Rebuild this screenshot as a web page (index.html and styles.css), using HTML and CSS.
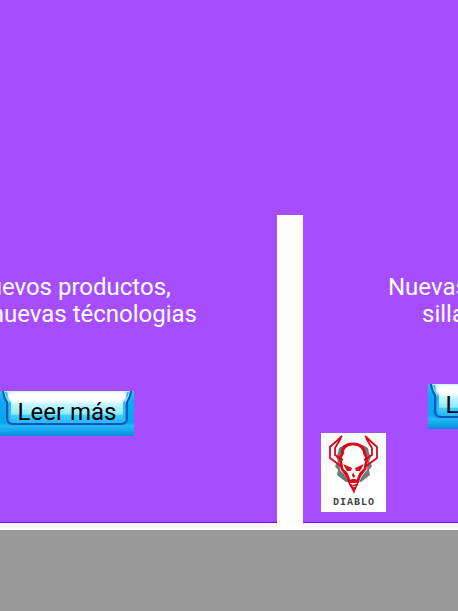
FILE: index.html
```html
<!DOCTYPE html>
<html lang="es">
<head>
<meta charset="utf-8">
<meta name="viewport" content="width=device-width, initial-scale=1">
<title>Novedades</title>
<link rel="stylesheet" href="styles.css">
</head>
<body>
<svg class="defs" aria-hidden="true">
  <defs>
    <linearGradient id="base" x2="0" y2="1"><stop offset="0" stop-color="#2fc0f8"/><stop offset=".25" stop-color="#12a8f2"/><stop offset=".7" stop-color="#08a5ef"/><stop offset=".78" stop-color="#29b5f5"/><stop offset=".9" stop-color="#0fa5ee"/><stop offset="1" stop-color="#0787db"/></linearGradient>
    <linearGradient id="glass" x2="0" y2="1"><stop offset="0" stop-color="#bdf3ff"/><stop offset=".35" stop-color="#d0faff"/><stop offset=".72" stop-color="#8eeaff"/><stop offset=".76" stop-color="#42cfff"/><stop offset="1" stop-color="#24b9f8"/></linearGradient>
    <filter id="soft" x="-10%" y="-30%" width="120%" height="160%"><feGaussianBlur stdDeviation="1"/></filter>
    <symbol id="bevel" viewBox="0 0 134 45">
      <path fill="url(#base)" d="M0 0h134v45H0z"/>
      <path fill="url(#glass)" d="M4 0q1 7 5 12v15q0 5 5 5h107q4 0 4-5V12q4-5 5-12z"/>
      <path fill="none" stroke="#0758bd" stroke-width="2" d="M3 0q1 7 4 11v16q0 6 6 6h108q6 0 6-6V11q3-4 4-11"/>
      <path fill="none" stroke="#35b7f5" stroke-width="2" d="M6 1q1 6 4 10v15q0 4 4 4h106q4 0 4-4V11q3-4 4-10"/>
      <rect x="8" y="1" width="118" height="10" rx="5" fill="#fff" filter="url(#soft)"/>
    </symbol>
  </defs>
</svg>
<header class="banner"></header>
<main class="cards">
  <article class="card card-products">
    <p class="text">Nuevos productos,<br>con nuevas técnologias</p>
    <button class="more" type="button"><svg aria-hidden="true"><use href="#bevel"/></svg><span>Leer más</span></button>
  </article>
  <article class="card card-chairs">
    <p class="text"><span>Nuevas</span><br><span class="second">sillas</span></p>
    <button class="more" type="button"><svg aria-hidden="true"><use href="#bevel"/></svg><span>Leer más</span></button>
    <div class="brand" role="img" aria-label="Diablo">
      <svg class="mask" viewBox="0 0 65 62" aria-hidden="true">
        <path fill="#6f7a7b" d="M23 12l-5 3-1 5-2 4 2 4-3 5 3 4-1 5 5 4 4 3h15l4-3 5-4-1-5 3-4-3-5 2-4-2-4-1-5-5-3z"/>
        <path fill="#fff" d="M22 16q11-12 21 0l4 8-1 13-5 6-8 16-8-16-6-6-1-13z"/>
        <g fill="none" stroke="#dc0719" stroke-linejoin="miter">
          <path stroke-width="1.8" d="M21 3L9 14v11l12 9M20 5l-6 10v7l8 5M44 3l12 11v11l-12 9M45 5l6 10v7l-8 5"/>
          <path stroke-width="2.8" d="M21 22q0-11 11-11t12 11M22 19l-3 6 2 11 5 6 3 8M43 19l3 6-2 11-5 6-3 8"/>
          <path stroke-width="1.5" d="M27 45l2 7 4 6 3-6 2-7M28 51l4 2 5-2"/>
        </g>
        <path fill="#dc0719" d="M22 31l9 4-1 3h-4zM43 31l-9 4 1 3h4zM22 37l4 2 2 6-4-3zM43 37l-4 2-2 6 4-3zM31 43l1-4 2 4-1 2zM27 48l4-2h3l4 2-3 2h-5zM30 54h5l-2 7z"/>
      </svg>
      <span class="name"><span>D</span><span>I</span><span>A</span><span>B</span><span>L</span><span>O</span></span>
    </div>
  </article>
</main>
<footer class="footer"></footer>
</body>
</html>
```
FILE: styles.css
```css
* { box-sizing: border-box; }
body {
  margin: 0;
  min-height: 100vh;
  display: flex;
  flex-direction: column;
  overflow-x: hidden;
  background: #fff;
  font-family: Roboto, "Liberation Sans", sans-serif;
}
.defs { position: absolute; width: 0; height: 0; }
.banner { min-height: 215px; background: #a64dff; }
.cards {
  display: grid;
  grid-template-columns: 277fr 155fr;
  column-gap: 26px;
  padding-bottom: 7px;
}
.card {
  min-width: 0;
  display: flex;
  flex-direction: column;
  overflow: hidden;
  padding-top: 59px;
  background: #a64dff;
  border-bottom: 1px solid #7800f0;
}
.text {
  margin: 0;
  color: #fff;
  font-size: 24px;
  line-height: 27px;
  white-space: nowrap;
}
.more {
  position: relative;
  flex: none;
  width: 134px;
  height: 45px;
  padding: 0 0 4px;
  border: 0;
  background: none;
  color: #000;
  font: 24px/38px Roboto, "Liberation Sans", sans-serif;
  white-space: nowrap;
}
.more svg { position: absolute; inset: 0; width: 100%; height: 100%; }
.more span { position: relative; }
.card-products .text { align-self: flex-end; margin-right: 80px; text-align: center; }
.card-products .more { margin-top: 63px; }
.card-chairs .text { padding-left: 85px; }
.second { padding-left: 34px; }
.card-chairs .more { margin: 56px 0 0 125px; }
.brand {
  width: 65px;
  height: 79px;
  margin: 4px 0 10px 18px;
  display: flex;
  flex-direction: column;
  background: #fff;
}
.mask { flex: none; width: 65px; height: 62px; }
.name {
  display: flex;
  justify-content: space-between;
  padding: 0 12px;
  color: #444;
  font: bold 10px/16px "Liberation Mono", monospace;
}
.footer { flex: 1; min-height: 81px; background: #999; }
```
